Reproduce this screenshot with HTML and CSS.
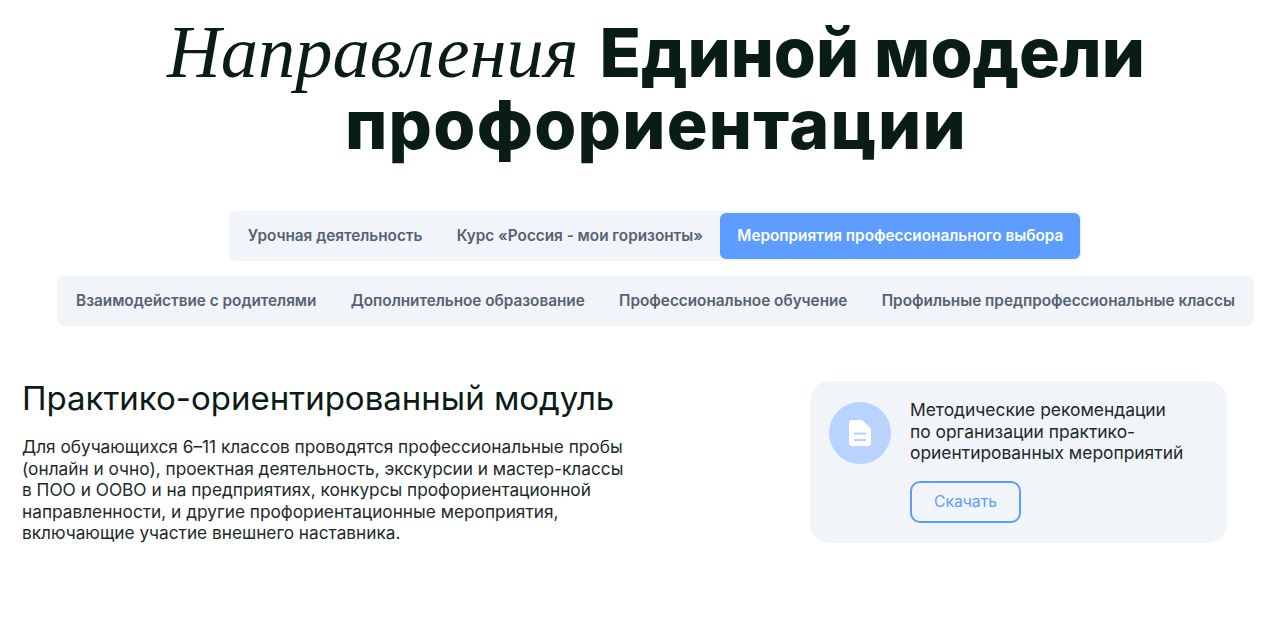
FILE: index.html
```html
<!DOCTYPE html>
<html lang="en">
<head>
    <meta charset="UTF-8">
    <meta name="viewport" content="width=device-width, initial-scale=1.0">
    <title>Направления</title>
    <link rel="stylesheet" href="styles.css">
</head>
<body>
<div class="page">
    <h1 class="title"><em>Направления</em> <b>Единой модели</b><br><b class="wide">профориентации</b></h1>
    <div class="tabs">
        <div class="tabs-row">
            <a href="javascript:;" class="tab">Урочная деятельность</a>
            <a href="javascript:;" class="tab">Курс «Россия - мои горизонты»</a>
            <a href="javascript:;" class="tab active">Мероприятия профессионального выбора</a>
        </div>
        <div class="tabs-row">
            <a href="javascript:;" class="tab">Взаимодействие с родителями</a>
            <a href="javascript:;" class="tab">Дополнительное образование</a>
            <a href="javascript:;" class="tab">Профессиональное обучение</a>
            <a href="javascript:;" class="tab">Профильные предпрофессиональные классы</a>
        </div>
    </div>
    <div class="content">
        <div class="info">
            <h2>Практико-ориентированный модуль</h2>
            <p>Для обучающихся 6–11 классов проводятся профессиональные пробы<br>(онлайн и очно), проектная деятельность, экскурсии и мастер-классы<br>в ПОО и ООВО и на предприятиях, конкурсы профориентационной<br>направленности, и другие профориентационные мероприятия,<br>включающие участие внешнего наставника.</p>
        </div>
        <div class="card">
            <div class="card-icon">
                <svg width="22" height="26" viewBox="0 0 22 26"><path fill="#fff" fill-rule="evenodd" d="M3 0h9.500a1.500 1.500 0 0 1 1.100.4l8 8a1.500 1.500 0 0 1 .4 1.100V23a3 3 0 0 1-3 3H3a3 3 0 0 1-3-3V3a3 3 0 0 1 3-3zM5 12.500v2.200h12v-2.200zM5 19v2.200h12V19z"/></svg>
            </div>
            <div class="card-body">
                <div class="card-text">Методические рекомендации<br>по организации практико-<br>ориентированных мероприятий</div>
                <a href="javascript:;" class="btn">Скачать</a>
            </div>
        </div>
    </div>
</div>
</body>
</html>
```
FILE: styles.css
```css
*{
    margin: 0;
    padding: 0;
    box-sizing: border-box;
}
body{
    background: #fff;
    font-family: Inter, "Liberation Sans", sans-serif;
    color: #0b1b18;
}
.title{
    width: 1100px;
    margin-left: 106px;
    padding-top: 14px;
    text-align: center;
    font-size: 74.500px;
    line-height: 72px;
    font-weight: 400;
    color: #0a1c18;
}
.title em{
    font-family: "Liberation Serif", serif;
    font-style: italic;
    line-height: 0;
}
.title b{
    font-family: Inter, sans-serif;
    font-weight: 800;
    font-size: 68px;
    line-height: 0;
}
.title .wide{
    letter-spacing: 1.300px;
}
.tabs{
    display: flex;
    flex-direction: column;
    align-items: center;
    gap: 15px;
    margin-top: 53px;
    padding-left: 31px;
}
.tabs-row{
    display: flex;
    padding: 2px;
    background: #f1f4f9;
    border-radius: 8px;
}
.tab{
    display: block;
    padding: 0 17.150px;
    height: 46px;
    line-height: 46px;
    font-size: 15.300px;
    font-weight: 600;
    color: #566272;
    text-decoration: none;
    border-radius: 6px;
    white-space: nowrap;
}
.tab.active{
    background: #5c9dff;
    color: #fff;
}
.content{
    display: flex;
    justify-content: space-between;
    align-items: flex-start;
    margin-top: 53px;
    padding-left: 22px;
    padding-right: 53px;
}
.info{
    width: 640px;
}
.info h2{
    font-size: 33px;
    line-height: 38px;
    font-weight: 400;
    color: #0b1b18;
}
.info p{
    margin-top: 19px;
    font-size: 17.250px;
    line-height: 21.500px;
    color: #1c2a2a;
}
.card{
    display: flex;
    gap: 19px;
    width: 417px;
    height: 162px;
    margin-top: 2px;
    padding: 18px 19px;
    background: #f1f4f9;
    border-radius: 20px;
}
.card-icon{
    flex: none;
    display: flex;
    align-items: center;
    justify-content: center;
    width: 62px;
    height: 62px;
    margin-top: 3px;
    border-radius: 50%;
    background: #b8d3ff;
}
.card-text{
    font-size: 17.400px;
    line-height: 21.500px;
    color: #1c2a2a;
}
.btn{
    display: block;
    width: 111px;
    height: 42px;
    margin-top: 17px;
    line-height: 38px;
    text-align: center;
    font-size: 15.750px;
    color: #5c9dff;
    text-decoration: none;
    border: 2px solid #5c9dff;
    border-radius: 10px;
}
```
